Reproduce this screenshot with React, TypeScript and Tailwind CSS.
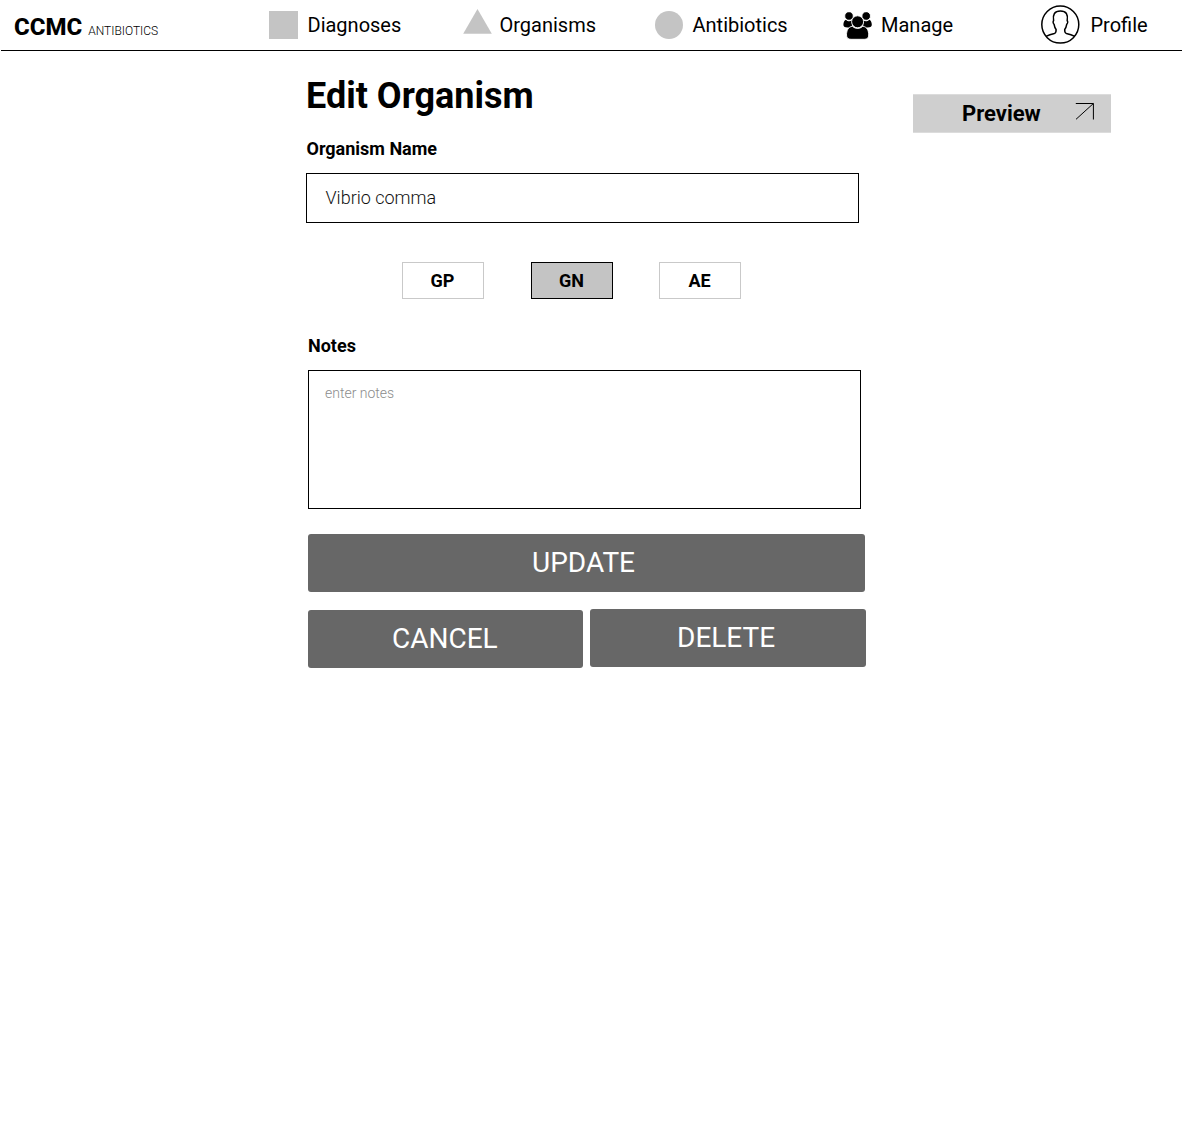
import type { ReactNode } from "react";

function NavItem({ icon, label, gap }: { icon: ReactNode; label: string; gap: string }) {
  return (
    <a className="flex h-[50px] items-center text-[20px] leading-[24px]">
      {icon}
      <span className={gap}>{label}</span>
    </a>
  );
}

function TriangleIcon() {
  return (
    <svg className="-mt-[7px] h-[25px] w-[29px]" viewBox="0 0 29 25">
      <path d="M14.5 0 28.8 24.8H.2Z" fill="#c4c4c4" />
    </svg>
  );
}

function PeopleIcon() {
  return (
    <svg className="mt-px h-[28px] w-[29px]" viewBox="0 0 29 28">
      <path d="M3 7.7C4.8 9.6 7.2 9.6 9 8.2V15.4H4.8C1.4 15.4.3 14.4.4 12.2C.5 10 1.6 8 3 7.7Z" />
      <path d="M26.2 7.7C24.4 9.6 22 9.6 20.2 8.2V15.4H24.4C27.8 15.4 28.9 14.4 28.8 12.2C28.7 10 27.6 8 26.2 7.7Z" />
      <circle cx="6" cy="4" r="4.3" stroke="#fff" strokeWidth=".9" />
      <circle cx="23.2" cy="4" r="4.3" stroke="#fff" strokeWidth=".9" />
      <path
        d="M9.4 14.2C12.2 17.1 17 17.1 19.8 14.2C24.1 14.8 25.7 18.8 25.7 23C25.7 26 24.2 27.3 21.2 27.3H8C5 27.3 3.5 26 3.5 23C3.5 18.8 5.1 14.8 9.4 14.2Z"
        stroke="#fff"
        strokeWidth=".9"
      />
      <circle cx="14.6" cy="9.8" r="6" stroke="#fff" strokeWidth=".9" />
    </svg>
  );
}

function ProfileIcon() {
  return (
    <svg className="h-[40px] w-[40px]" viewBox="0 0 40 40" fill="none" stroke="#000" strokeWidth="1.5">
      <circle cx="19.3" cy="19.6" r="18.5" />
      <path d="M5 31.4C8 29.7 11 28.9 13.5 28.4C14.9 27.9 15.2 26.8 15.1 24.5C13.8 22.8 13.4 21.2 13.1 19.3C12 18.5 11.8 16.6 12.6 15.5C11.6 9.5 13.5 6 19.4 6C25.3 6 27.2 9.5 26.2 15.5C27 16.6 26.8 18.5 25.7 19.3C25.4 21.2 25 22.8 23.7 24.5C23.6 26.8 23.9 27.9 25.3 28.4C27.8 28.9 30.8 29.7 33.8 31.4" />
    </svg>
  );
}

function Header() {
  return (
    <header className="ml-px grid h-[51px] grid-cols-[268px_194px_192px_188px_198px_1fr] border-b border-black">
      <div className="flex items-baseline pt-[11px] pl-[13px]">
        <span className="text-[24px] leading-[32px] font-extrabold">CCMC</span>
        <span className="ml-[6px] text-[12px] font-light">ANTIBIOTICS</span>
      </div>
      <NavItem icon={<span className="size-[28.5px] bg-[#c4c4c4]" />} label="Diagnoses" gap="ml-[10px]" />
      <NavItem icon={<TriangleIcon />} label="Organisms" gap="ml-[7.5px]" />
      <NavItem icon={<span className="-ml-[0.5px] size-[28.5px] rounded-full bg-[#c4c4c4]" />} label="Antibiotics" gap="ml-[9.5px]" />
      <NavItem icon={<PeopleIcon />} label="Manage" gap="ml-[9px]" />
      <NavItem icon={<ProfileIcon />} label="Profile" gap="ml-[9.5px]" />
    </header>
  );
}

function Button({ label, className }: { label: string; className: string }) {
  return (
    <button className={`flex h-[58px] items-center rounded-[3px] bg-[#676767] text-[28px] leading-[32px] text-white ${className}`}>
      {label}
    </button>
  );
}

export default function App() {
  return (
    <div className="h-[1131px] w-[1182px] overflow-hidden bg-white font-['Roboto',sans-serif] text-black">
      <Header />
      <div className="flex">
        <main className="ml-[306px] w-[560px]">
          <h1 className="mt-[24px] text-[36px] leading-[42px] font-bold">Edit Organism</h1>
          <label className="mt-[21px] ml-[0.5px] block text-[18px] leading-[22px] font-bold">Organism Name</label>
          <div className="mt-[13px] flex h-[50px] w-[553px] items-center border border-black pb-px pl-[18.5px] text-[18px] font-light text-[#111]">
            Vibrio comma
          </div>
          <div className="mt-[39px] ml-[95.5px] flex gap-[46.5px] text-[18px] font-bold">
            <button className="h-[37px] w-[82px] border border-[#c9c9c9]">GP</button>
            <button className="ml-[0.5px] h-[37px] w-[82px] border border-black bg-[#c4c4c4]">GN</button>
            <button className="-ml-[0.5px] h-[37px] w-[82px] border border-[#c9c9c9]">AE</button>
          </div>
          <div className="ml-[2px]">
            <label className="mt-[36px] block text-[18px] leading-[22px] font-bold">Notes</label>
            <div className="mt-[13px] h-[139px] w-[553px] border border-black pt-[12px] pl-[16px] text-[14px] leading-[20px] font-light text-[#8c8c8c]">
              enter notes
            </div>
            <Button label="UPDATE" className="mt-[25px] w-[557px] pl-[224px]" />
            <div className="mt-[17px] flex gap-[7px]">
              <Button label="CANCEL" className="mt-px w-[275px] pl-[84px]" />
              <Button label="DELETE" className="w-[276px] pl-[87px]" />
            </div>
          </div>
        </main>
        <button className="mt-[43px] ml-[47px] flex h-[39px] w-[198px] items-center border-y border-[#dcdcdc] bg-[#cfcfcf] pl-[49px] text-[22px] font-bold">
          Preview
          <svg className="-mt-[4px] ml-[34px] h-[19px] w-[20px]" viewBox="0 0 20 19" fill="none" stroke="#000" strokeWidth="1">
            <path d="M.8 1.5H18.4V17.5M18.4 1.5 1 17.3" />
          </svg>
        </button>
      </div>
    </div>
  );
}
